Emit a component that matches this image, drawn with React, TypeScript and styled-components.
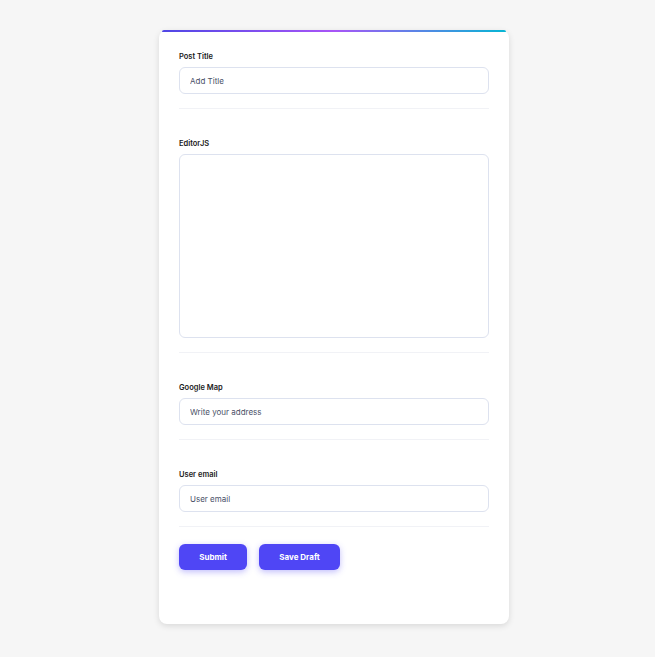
import React from 'react';
import styled, { createGlobalStyle } from 'styled-components';

const GlobalStyle = createGlobalStyle`
  html, body {
    margin: 0;
    padding: 0;
    background: #f6f6f6;
    font-family: Inter, "Noto Sans", sans-serif;
  }
`;

const Page = styled.div`
  min-height: 657px;
  display: flex;
  justify-content: center;
  padding: 30px 0 0 13px;
  box-sizing: border-box;
`;

const Card = styled.form`
  position: relative;
  width: 350px;
  height: 594px;
  box-sizing: border-box;
  background: #fff;
  border-radius: 8px;
  box-shadow: 0 2px 6px rgba(0, 0, 0, 0.12);
  padding: 20px 20px 0;
  display: flex;
  flex-direction: column;

  &::before {
    content: '';
    position: absolute;
    top: 0;
    left: 3px;
    right: 3px;
    height: 2px;
    border-radius: 2px 2px 0 0;
    background: linear-gradient(90deg, #4f46e5 0%, #a855f7 50%, #06b6d4 100%);
  }
`;

const Section = styled.div`
  display: flex;
  flex-direction: column;
`;

const Label = styled.label`
  font-size: 7.5px;
  font-weight: 600;
  color: #1a1a1a;
  line-height: 13px;
  margin-bottom: 4px;
`;

const Input = styled.input`
  height: 27px;
  box-sizing: border-box;
  border: 1px solid #dde2ef;
  border-radius: 6px;
  padding: 0 10px;
  font-family: inherit;
  font-size: 8px;
  color: #333a4d;
  background: #fff;
  outline: none;

  &::placeholder {
    color: #4a5168;
  }
`;

const Editor = styled.div`
  height: 184px;
  box-sizing: border-box;
  border: 1px solid #dde2ef;
  border-radius: 6px;
`;

const Divider = styled.hr<{ $after?: number }>`
  border: none;
  border-top: 1px solid #f1f2f6;
  margin: 14px 0 ${p => p.$after ?? 28}px;
`;

const Actions = styled.div`
  display: flex;
  gap: 12px;
`;

const Button = styled.button<{ $w: number }>`
  width: ${p => p.$w}px;
  height: 26px;
  border: none;
  border-radius: 6px;
  background: #4f46f5;
  color: #fff;
  font-family: inherit;
  font-size: 8px;
  font-weight: 700;
  box-shadow: 0 2px 6px rgba(79, 70, 245, 0.35);
  cursor: pointer;
`;

const App: React.FC = () => {
  return (
    <>
      <GlobalStyle />
      <Page>
        <Card>
          <Section>
            <Label>Post Title</Label>
            <Input placeholder="Add Title" />
          </Section>
          <Divider />
          <Section>
            <Label>EditorJS</Label>
            <Editor />
          </Section>
          <Divider />
          <Section>
            <Label>Google Map</Label>
            <Input placeholder="Write your address" />
          </Section>
          <Divider />
          <Section>
            <Label>User email</Label>
            <Input placeholder="User email" />
          </Section>
          <Divider $after={17} />
          <Actions>
            <Button type="button" $w={68}>Submit</Button>
            <Button type="button" $w={81}>Save Draft</Button>
          </Actions>
        </Card>
      </Page>
    </>
  );
};

export default App;
